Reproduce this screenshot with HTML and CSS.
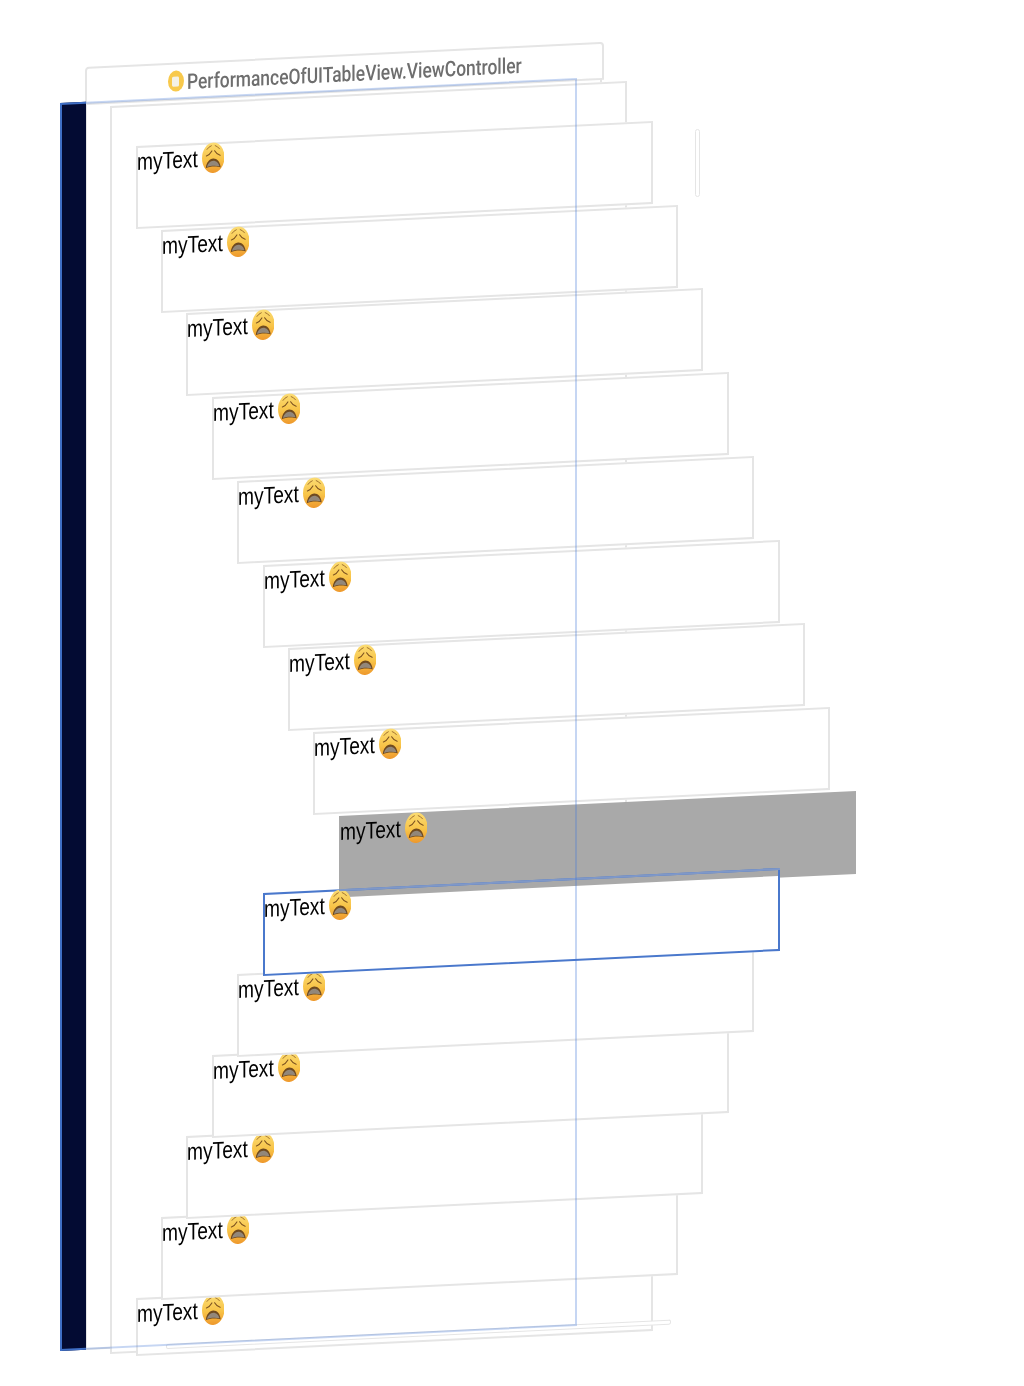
FILE: index.html
```html
<!DOCTYPE html>
<html lang="en">
<head>
  <meta charset="UTF-8" />
  <title>PerformanceOfUITableView.ViewController</title>
  <link rel="stylesheet" href="styles.css">
</head>
<body>
  <svg class="defs" width="0" height="0" aria-hidden="true">
    <defs>
      <linearGradient id="faceFill" x1="0" y1="0" x2="0" y2="1">
        <stop offset="0" stop-color="#fbdc74" />
        <stop offset="0.55" stop-color="#f8c448" />
        <stop offset="1" stop-color="#ee982c" />
      </linearGradient>
      <symbol id="weary" viewBox="0 0 22.5 31">
        <ellipse cx="11.25" cy="15.5" rx="11.25" ry="15.2" fill="url(#faceFill)" />
        <path d="M9.3 3.4 Q6.6 4.4 5 6.8 M13.2 3.4 Q15.9 4.4 17.5 6.8" fill="none" stroke="#9a6a2a" stroke-width="0.9" stroke-linecap="round" />
        <path d="M4.4 13.4 Q7.8 12.2 9.9 8.6 M18.1 13.4 Q14.7 12.2 12.6 8.6" fill="none" stroke="#7c5220" stroke-width="1.1" stroke-linecap="round" />
        <path d="M3.8 25.6 C4.2 19.6 7.8 16.2 11.25 16.2 C14.7 16.2 18.3 19.6 18.7 25.6 C15 23.8 7.5 23.8 3.8 25.6 Z" fill="#6f4a20" />
        <path d="M5 24.4 C5.8 20.6 8.6 18.4 11.25 18.4 C13.9 18.4 16.7 20.6 17.5 24.4 C14 23.1 8.5 23.1 5 24.4 Z" fill="#92877a" />
      </symbol>
    </defs>
  </svg>

  <main class="canvas">
    <div class="layer nav-layer">
      <span class="nav-icon"></span>
      <span class="nav-title">PerformanceOfUITableView.ViewController</span>
    </div>
    <div class="layer root-view"></div>
    <div class="layer table-view"></div>

    <div class="layer cell row-15"><span class="cell-text">myText</span><svg class="emoji"><use href="#weary" /></svg></div>
    <div class="layer cell row-14"><span class="cell-text">myText</span><svg class="emoji"><use href="#weary" /></svg></div>
    <div class="layer cell row-13"><span class="cell-text">myText</span><svg class="emoji"><use href="#weary" /></svg></div>
    <div class="layer cell row-12"><span class="cell-text">myText</span><svg class="emoji"><use href="#weary" /></svg></div>
    <div class="layer cell row-11"><span class="cell-text">myText</span><svg class="emoji"><use href="#weary" /></svg></div>

    <div class="layer cell row-1"><span class="cell-text">myText</span><svg class="emoji"><use href="#weary" /></svg></div>
    <div class="layer cell row-2"><span class="cell-text">myText</span><svg class="emoji"><use href="#weary" /></svg></div>
    <div class="layer cell row-3"><span class="cell-text">myText</span><svg class="emoji"><use href="#weary" /></svg></div>
    <div class="layer cell row-4"><span class="cell-text">myText</span><svg class="emoji"><use href="#weary" /></svg></div>
    <div class="layer cell row-5"><span class="cell-text">myText</span><svg class="emoji"><use href="#weary" /></svg></div>
    <div class="layer cell row-6"><span class="cell-text">myText</span><svg class="emoji"><use href="#weary" /></svg></div>
    <div class="layer cell row-7"><span class="cell-text">myText</span><svg class="emoji"><use href="#weary" /></svg></div>
    <div class="layer cell row-8"><span class="cell-text">myText</span><svg class="emoji"><use href="#weary" /></svg></div>
    <div class="layer cell row-9 selected-bg"><span class="cell-text">myText</span><svg class="emoji"><use href="#weary" /></svg></div>
    <div class="layer cell row-10 selected"><span class="cell-text">myText</span><svg class="emoji"><use href="#weary" /></svg></div>

    <div class="layer tab-strip"></div>
    <div class="scroll-pill"></div>
    <div class="layer window-outline"><div class="window-strip"></div></div>
  </main>
</body>
</html>
```

FILE: styles.css
```css
* {
  box-sizing: border-box;
}
body {
  margin: 0;
  background: white;
}
.defs {
  position: absolute;
}

/* free canvas, every layer keeps the exploded-view tilt */
.canvas {
  position: relative;
  width: 1024px;
  height: 1386px;
  overflow: hidden;
  filter: blur(0.3px);
}
.layer {
  position: absolute;
  width: 517px;
  border: 2px solid #e5e5e5;
  background: white;
  transform: skewY(-2.774deg);
  transform-origin: 0 0;
}

/* back layers */
.nav-layer {
  left: 84.5px;
  top: 67px;
  width: 518.5px;
  height: 37.5px;
  border-radius: 4px 4px 0 0;
}
.nav-icon {
  position: absolute;
  left: 80.5px;
  top: 6px;
  width: 16px;
  height: 21px;
  border-radius: 50%;
  background: #f8c94c;
}
.nav-icon::after {
  content: "";
  position: absolute;
  left: 4.5px;
  top: 5.5px;
  width: 7px;
  height: 10px;
  border-radius: 1.5px;
  background: #f4f1e6;
}
.nav-title {
  position: absolute;
  left: 100px;
  top: 6px;
  font-family: Roboto, sans-serif;
  font-size: 21.5px;
  font-weight: 500;
  line-height: 24px;
  color: #6e6e6e;
  white-space: nowrap;
  transform: scaleX(0.81);
  transform-origin: 0 0;
}
.root-view {
  left: 84.5px;
  top: 103px;
  height: 1247px;
}
.table-view {
  left: 110px;
  top: 106px;
  height: 1248px;
}

/* table cells */
.cell {
  display: flex;
  align-items: flex-start;
  height: 83px;
}
.cell-text {
  flex: none;
  width: 65px;
  margin-left: -1.5px;
  font-family: "Liberation Sans", Arial, sans-serif;
  font-size: 24px;
  line-height: 28px;
  color: black;
  white-space: nowrap;
  transform: scaleX(0.8);
  transform-origin: 0 0;
}
.emoji {
  flex: none;
  width: 22.5px;
  height: 31px;
  margin-top: -2.5px;
}
.row-1 { left: 135.5px; top: 146px; }
.row-2 { left: 161px; top: 229.7px; }
.row-3 { left: 186px; top: 313.4px; }
.row-4 { left: 211.5px; top: 397px; }
.row-5 { left: 237px; top: 480.8px; }
.row-6 { left: 262.5px; top: 564.5px; }
.row-7 { left: 288px; top: 648.2px; }
.row-8 { left: 313px; top: 732px; }
.row-9 { left: 338.5px; top: 815.5px; }
.row-10 { left: 262.5px; top: 893px; }
.row-11 { left: 237px; top: 974px; height: 82.5px; }
.row-12 { left: 211.5px; top: 1055px; height: 82.5px; }
.row-13 { left: 186px; top: 1136px; height: 82.5px; }
.row-14 { left: 161px; top: 1216.5px; height: 82.5px; }
.row-15 { left: 135.5px; top: 1297.5px; height: 57.5px; }

.selected-bg {
  border: none;
  padding: 2px;
  background: #a9a9a9;
}
/* the grey row shows through the top of this one */
.selected {
  border-color: #4a78cc;
  background:
    linear-gradient(white, white) 0 0 / 74px 100% no-repeat,
    linear-gradient(white, white) 0 5.5px / 100% 100% no-repeat;
}
.selected::after {
  content: "";
  position: absolute;
  left: 74px;
  right: -2px;
  top: -2px;
  height: 2px;
  background: #7f98c8;
}

.tab-strip {
  left: 165.5px;
  top: 1343.5px;
  width: 505px;
  height: 5px;
  border-width: 1.5px;
  border-radius: 2px;
}
.scroll-pill {
  position: absolute;
  left: 695px;
  top: 129px;
  width: 5px;
  height: 68px;
  border: 1.5px solid #e5e5e5;
  border-radius: 3px;
}

/* window outline sits on top of everything */
.window-outline {
  left: 59.5px;
  top: 103px;
  height: 1248px;
  border-color: rgba(66, 118, 214, 0.3);
  background: none;
}
.window-strip {
  position: absolute;
  left: -2px;
  top: -2px;
  bottom: -2px;
  width: 26px;
  background: #030b33;
  border: 2px solid #3f6fc6;
  border-right: none;
}
```
